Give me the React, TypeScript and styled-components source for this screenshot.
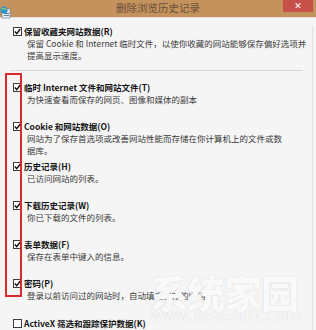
import React from 'react'
import styled, { createGlobalStyle } from 'styled-components'

const GlobalStyle = createGlobalStyle`
  html, body {
    margin: 0;
    padding: 0;
    background: #f3f3f3;
  }
  body {
    font-family: "Noto Sans CJK SC", "Noto Sans", sans-serif;
  }
`

const Window = styled.div`
  position: relative;
  width: 316px;
  height: 330px;
  overflow: hidden;
  background: #c4925d;
`

const TitleBar = styled.div`
  position: relative;
  height: 17px;
  display: flex;
  align-items: center;
  justify-content: center;
`

const Title = styled.span`
  font-size: 10.5px;
  line-height: 14px;
  color: #6a5139;
  margin-top: -2px;
`

const AppIcon = styled.div`
  position: absolute;
  left: 0;
  top: 0;
  width: 11px;
  height: 13px;
`

const CloseButton = styled.div`
  position: absolute;
  right: 3px;
  top: 0;
  width: 30px;
  height: 12px;
  background: #c7504a;
  display: flex;
  align-items: center;
  justify-content: center;
  color: #fff;
  font-size: 9px;
  line-height: 12px;
  font-family: "DejaVu Sans", sans-serif;
`

const Body = styled.div`
  height: 313px;
  background: #f5f5f5;
  border-top: 1px solid #e6e1dc;
  box-sizing: border-box;
  padding: 8px 0 0 0;
`

const Panel = styled.div`
  margin-left: 5px;
  margin-right: 3px;
  border-right: 1px solid #e2e2e2;
  height: 100%;
`

const Item = styled.div<{ $h: number }>`
  height: ${p => p.$h}px;
  box-sizing: border-box;
`

const LabelRow = styled.label`
  display: flex;
  align-items: center;
  height: 11px;
  padding-left: 8px;
`

const Box = styled.span<{ $checked: boolean }>`
  width: 9px;
  height: 9px;
  box-sizing: border-box;
  border: 1px solid #3c3c3c;
  background: #fff;
  display: flex;
  align-items: center;
  justify-content: center;
  margin-right: 2px;
  flex-shrink: 0;
  svg {
    display: ${p => (p.$checked ? 'block' : 'none')};
  }
`

const LabelText = styled.span`
  font-size: 8.5px;
  font-weight: 700;
  color: #151515;
  white-space: nowrap;
  line-height: 11px;
`

const Desc = styled.div`
  padding-left: 22px;
  font-size: 8.5px;
  line-height: 12px;
  color: #3a3a3a;
  white-space: nowrap;
`

const Separator = styled.div`
  height: 1px;
  background: #d8d8d8;
  margin: 5px 9px 11px 5px;
`

const Highlight = styled.div`
  position: absolute;
  left: 5px;
  top: 73px;
  width: 17px;
  height: 224px;
  box-sizing: border-box;
  border: 2px solid #d92b2e;
  pointer-events: none;
`

const Watermark = styled.div`
  position: absolute;
  left: 150px;
  top: 270px;
  display: flex;
  flex-direction: column;
  align-items: flex-start;
  color: rgba(255, 255, 255, 0.92);
  text-shadow: 0 0 1px rgba(170, 170, 170, 0.6);
  pointer-events: none;
`

const MarkBig = styled.span`
  font-size: 38px;
  line-height: 44px;
  font-weight: 900;
  letter-spacing: -1px;
`

const MarkSmall = styled.span`
  font-family: "DejaVu Sans", sans-serif;
  font-size: 15px;
  line-height: 16px;
  letter-spacing: 1px;
  margin-top: -6px;
`

const Check = () => (
  <svg width="7" height="7" viewBox="0 0 7 7">
    <path d="M0.8 3.6 L2.7 5.6 L6.3 1" fill="none" stroke="#111" strokeWidth="1.4" />
  </svg>
)

type Option = { label: string; desc: string[]; checked: boolean }

const first: Option = {
  label: '保留收藏夹网站数据(R)',
  desc: ['保留 Cookie 和 Internet 临时文件，以使你收藏的网站能够保存偏好选项并', '提高显示速度。'],
  checked: true,
}

const options: Option[] = [
  { label: '临时 Internet 文件和网站文件(T)', desc: ['为快速查看而保存的网页、图像和媒体的副本'], checked: true },
  { label: 'Cookie 和网站数据(O)', desc: ['网站为了保存首选项或改善网站性能而存储在你计算机上的文件或数', '据库。'], checked: true },
  { label: '历史记录(H)', desc: ['已访问网站的列表。'], checked: true },
  { label: '下载历史记录(W)', desc: ['你已下载的文件的列表。'], checked: true },
  { label: '表单数据(F)', desc: ['保存在表单中键入的信息。'], checked: true },
  { label: '密码(P)', desc: ['登录以前访问过的网站时，自动填充保存的密码'], checked: true },
  { label: 'ActiveX 筛选和跟踪保护数据(K)', desc: [], checked: false },
]

const OptionItem = ({ opt, h }: { opt: Option; h: number }) => (
  <Item $h={h}>
    <LabelRow>
      <Box $checked={opt.checked}>
        <Check />
      </Box>
      <LabelText>{opt.label}</LabelText>
    </LabelRow>
    {opt.desc.map(line => (
      <Desc key={line}>{line}</Desc>
    ))}
  </Item>
)

const App = () => {
  return (
    <>
      <GlobalStyle />
      <Window>
        <TitleBar>
          <AppIcon>
            <svg width="11" height="13" viewBox="0 0 11 13">
              <rect x="2" y="3" width="8" height="9" fill="#e8eef4" stroke="#7d93a8" strokeWidth="0.8" />
              <circle cx="4" cy="4" r="3.6" fill="#2f8fd0" />
              <path d="M1.2 3.4 Q4 1.6 6.8 3.8" stroke="#7fd36b" strokeWidth="1.2" fill="none" />
              <rect x="4" y="7" width="5" height="1" fill="#5a7fa0" />
              <rect x="4" y="9" width="5" height="1" fill="#5a7fa0" />
            </svg>
          </AppIcon>
          <Title>删除浏览历史记录</Title>
          <CloseButton>✕</CloseButton>
        </TitleBar>
        <Body>
          <Panel>
            <OptionItem opt={first} h={39} />
            <Separator />
            {options.map(o => (
              <OptionItem key={o.label} opt={o} h={39.3} />
            ))}
          </Panel>
        </Body>
        <Highlight />
        <Watermark>
          <MarkBig>系统家园</MarkBig>
          <MarkSmall>www.bolecdir.com</MarkSmall>
        </Watermark>
      </Window>
    </>
  )
}

export default App
